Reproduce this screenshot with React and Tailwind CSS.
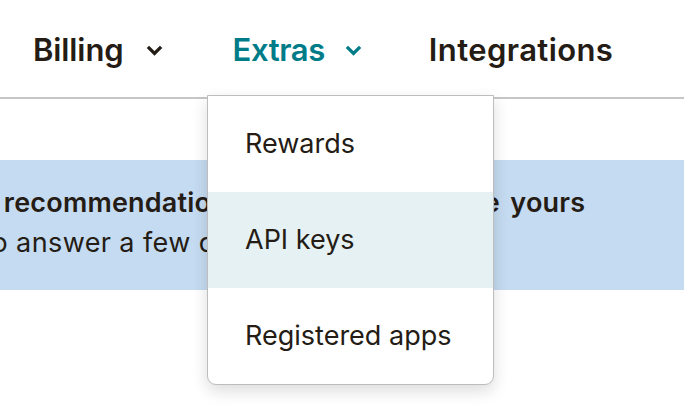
import React from "react";

function Chevron({ color }) {
  return (
    <svg width="17" height="11" viewBox="0 0 17 11" fill="none" className="shrink-0">
      <path d="M1.9 1.9 L8.5 8.4 L15.1 1.9" stroke={color} strokeWidth="3.3" strokeLinejoin="miter" />
    </svg>
  );
}

export default function App() {
  return (
    <div
      className="relative w-[684px] h-[414px] overflow-hidden bg-white text-[#241c15]"
      style={{ fontFamily: "Inter, 'Noto Sans', sans-serif" }}
    >
      {/* Top nav */}
      <nav className="h-[94px] pt-[3px] flex items-center pl-[33px] border-b-2 border-[#c6c6c6] box-content">
        <div className="flex items-center gap-[22px]">
          <span className="text-[31px] font-semibold tracking-[-0.1px]">Billing</span>
          <Chevron color="#241c15" />
        </div>
        <div className="flex items-center gap-[20px] ml-[70px]">
          <span className="text-[31px] font-semibold text-[#007c89] tracking-[-0.4px]">Extras</span>
          <Chevron color="#007c89" />
        </div>
        <div className="ml-[67px]">
          <span className="text-[31px] font-semibold tracking-[0.4px]">Integrations</span>
        </div>
      </nav>

      {/* Banner */}
      <div className="mt-[61px] h-[130px] bg-[#c5dbf1] flex flex-col justify-center pb-[4px] overflow-hidden">
        <p className="whitespace-nowrap text-[27px] font-semibold leading-[40px] tracking-[0.2px] [word-spacing:3.5px] ml-[-53px]">
          Get recommendations that feel more like yours
        </p>
        <p className="whitespace-nowrap text-[27px] leading-[40px] tracking-[0.4px] ml-[-208px]">
          Take a minute to answer a few questions
        </p>
      </div>

      {/* Dropdown menu */}
      <div className="absolute left-[207px] top-[95px] w-[287px] bg-white border-[1.5px] border-[#bdbdbd] rounded-b-[9px] shadow-[0_6px_16px_rgba(0,0,0,0.14)] overflow-hidden">
        <ul className="flex flex-col text-[27px]">
          <li className="h-[96px] flex items-center pl-[37px]">Rewards</li>
          <li className="h-[96px] flex items-center pl-[37px] bg-[#e5f1f3]">API keys</li>
          <li className="h-[96px] flex items-center pl-[37px]">Registered apps</li>
        </ul>
      </div>
    </div>
  );
}
